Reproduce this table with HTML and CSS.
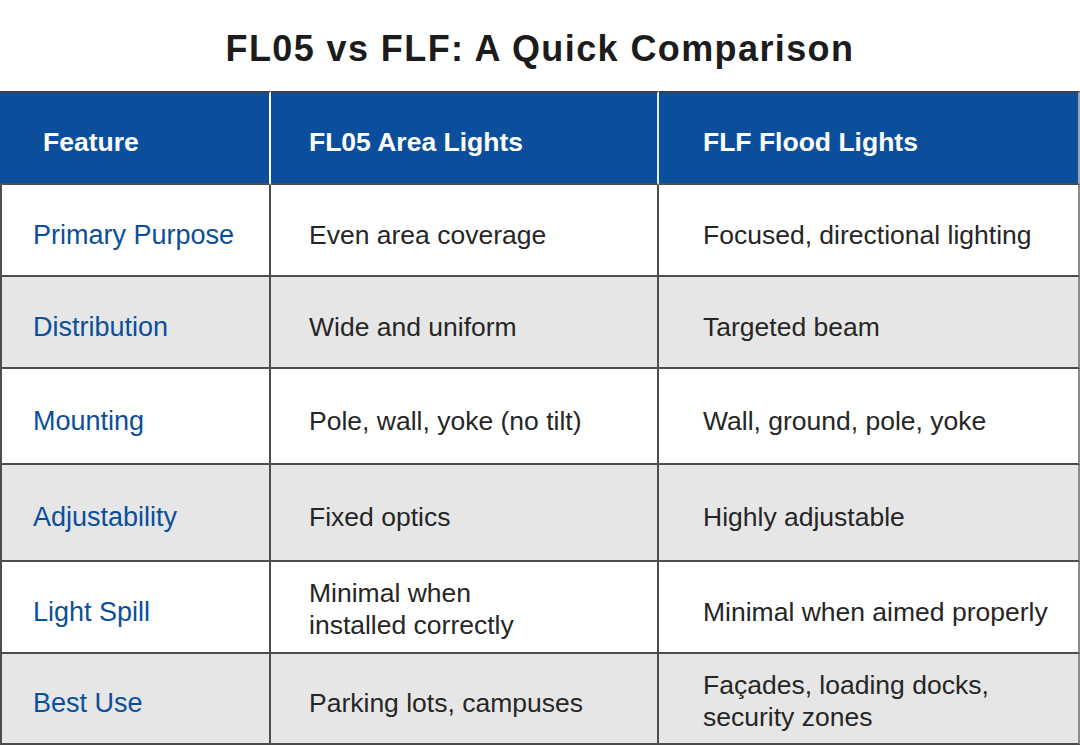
FILE: index.html
```html
<!DOCTYPE html>
<html lang="en">
<head>
<meta charset="utf-8">
<title>FL05 vs FLF: A Quick Comparison</title>
<link rel="stylesheet" href="styles.css">
</head>
<body>
<div class="page">
  <h1 class="title">FL05 vs FLF: A Quick Comparison</h1>
  <div class="table">
    <div class="cell head c1">Feature</div>
    <div class="cell head c2">FL05 Area Lights</div>
    <div class="cell head c3">FLF Flood Lights</div>

    <div class="cell c1 feat">Primary Purpose</div>
    <div class="cell c2">Even area coverage</div>
    <div class="cell c3">Focused, directional lighting</div>

    <div class="cell c1 feat alt">Distribution</div>
    <div class="cell c2 alt">Wide and uniform</div>
    <div class="cell c3 alt">Targeted beam</div>

    <div class="cell c1 feat">Mounting</div>
    <div class="cell c2">Pole, wall, yoke (no tilt)</div>
    <div class="cell c3">Wall, ground, pole, yoke</div>

    <div class="cell c1 feat alt">Adjustability</div>
    <div class="cell c2 alt">Fixed optics</div>
    <div class="cell c3 alt">Highly adjustable</div>

    <div class="cell c1 feat">Light Spill</div>
    <div class="cell c2 two">Minimal when<br>installed correctly</div>
    <div class="cell c3">Minimal when aimed properly</div>

    <div class="cell c1 feat alt">Best Use</div>
    <div class="cell c2 alt">Parking lots, campuses</div>
    <div class="cell c3 alt two">Façades, loading docks,<br>security zones</div>
  </div>
</div>
</body>
</html>
```
FILE: styles.css
```css
html, body {
  margin: 0;
  padding: 0;
  background: #ffffff;
}

body {
  font-family: "Liberation Sans", Arial, sans-serif;
  width: 1080px;
  height: 746px;
  overflow: hidden;
}

.page {
  display: flex;
  flex-direction: column;
}

.title {
  margin: 0;
  height: 91px;
  display: flex;
  align-items: center;
  justify-content: center;
  font-size: 36px;
  letter-spacing: 1.4px;
  font-weight: 700;
  color: #1c1c1c;
  padding-top: 6px;
  box-sizing: border-box;
}

.table {
  display: grid;
  grid-template-columns: 271px 388px 421px;
  grid-template-rows: 94px 92px 92px 96px 97px 92px 91px;
}

.cell {
  box-sizing: border-box;
  display: flex;
  align-items: center;
  border-right: 2px solid #4d4d4d;
  border-bottom: 2px solid #4d4d4d;
  font-size: 26.5px;
  line-height: 32px;
  color: #262626;
  background: #ffffff;
  padding-top: 9px;
}

.cell.two {
  padding-top: 4px;
}

.cell.c1 {
  border-left: 2px solid #4d4d4d;
  padding-left: 31px;
}

.cell.c2 {
  padding-left: 38px;
}

.cell.c3 {
  padding-left: 44px;
  border-right-color: #8a8a8a;
}

.cell.alt {
  background: #e6e6e6;
}

.cell.feat {
  color: #0b4f9c;
  font-size: 27px;
}

.cell.head {
  background: #0b4f9c;
  color: #ffffff;
  font-weight: 700;
  border-top: 2px solid #3f4246;
  border-bottom-color: #4d4d4d;
  border-right-color: #ffffff;
  padding-top: 7px;
}

.cell.head.c1 {
  border-left: none;
  padding-left: 43px;
}

.cell.head.c2 {
  border-right: 2px solid #e8eef6;
}

.cell.head.c3 {
  border-right: 2px solid #9aa6b5;
}
```
